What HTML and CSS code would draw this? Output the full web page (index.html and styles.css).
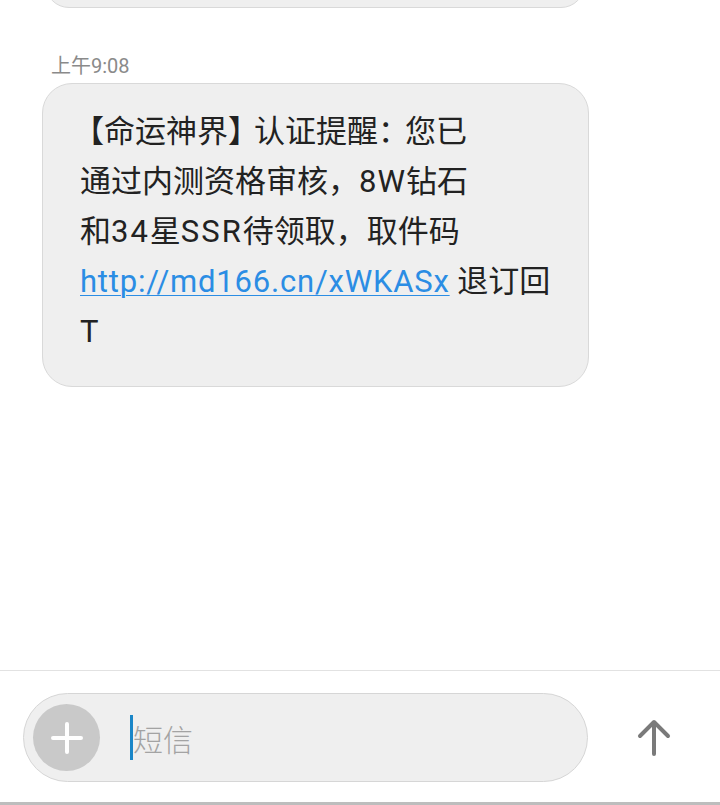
FILE: index.html
```html
<!DOCTYPE html>
<html>
<head>
    <meta charset="utf-8">
    <title>短信</title>
    <link rel="stylesheet" href="styles.css">
</head>
<body>
    <div class="thread">
        <div class="bubble prev"></div>
        <div class="time">上午9:08</div>
        <div class="bubble">
            【命运神界<span class="close">】</span>认证提醒<span class="colon">：</span>您已<br>
            通过内测资格审核，<span class="lat">8W</span>钻石<br>
            和<span class="num">34</span>星<span class="num">SSR</span>待领取，取件码<br>
            <a href="#">http://md166.cn/xWKASx</a> 退订回<br>
            T
        </div>
    </div>

    <div class="composer">
        <div class="input">
            <div class="add">
                <svg width="32" height="32" viewBox="0 0 32 32">
                    <path d="M16 2v28M2 16h28" stroke="#fff" stroke-width="4" stroke-linecap="round"/>
                </svg>
            </div>
            <span class="caret"></span>
            <span class="placeholder">短信</span>
        </div>
        <div class="send">
            <svg width="34" height="38" viewBox="0 0 34 38">
                <path d="M17 35V4M3 17L17 3l14 14" fill="none" stroke="#7a7a7a" stroke-width="4" stroke-linecap="round" stroke-linejoin="round"/>
            </svg>
        </div>
    </div>
</body>
</html>
```

FILE: styles.css
```css
* {
    box-sizing: border-box;
}

body {
    margin: 0;
    height: 805px;
    background-color: #fff;
    font-family: Roboto, "Noto Sans CJK SC", sans-serif;
    color: #222;
    display: flex;
    flex-direction: column;
    overflow: hidden;
}

.thread {
    flex: 1;
    padding-left: 42px;
}

.bubble {
    width: 547px;
    background-color: #efefef;
    border: 1px solid #d9d9d9;
    border-radius: 30px;
    padding: 23px 20px 29px 37px;
    font-size: 31px;
    line-height: 50px;
    text-indent: -7px;
}

.bubble.prev {
    height: 48px;
    margin-top: -40px;
    margin-left: 3px;
    width: 540px;
    padding: 0;
}

.bubble .close {
    letter-spacing: -5px;
}

.bubble .colon {
    letter-spacing: -4px;
}

.bubble .lat {
    letter-spacing: 1px;
}

.bubble .num {
    letter-spacing: 2px;
}

.bubble a {
    color: #2b8de4;
    letter-spacing: 0.8px;
    text-decoration: underline;
    text-decoration-thickness: 1px;
    text-underline-offset: 3px;
}

.time {
    margin: 46px 0 5px 9px;
    font-size: 20px;
    line-height: 24px;
    color: #8a8a8a;
}

.composer {
    border-top: 1px solid #e2e2e2;
    border-bottom: 3px solid #bdbdbd;
    padding: 22px 0 20px 23px;
    display: flex;
    align-items: center;
}

.input {
    width: 565px;
    height: 89px;
    border: 1px solid #d6d6d6;
    border-radius: 45px;
    background-color: #efefef;
    padding-left: 9px;
    display: flex;
    align-items: center;
}

.add {
    width: 67px;
    height: 67px;
    border-radius: 50%;
    background-color: #c9c9c9;
    display: flex;
    justify-content: center;
    align-items: center;
}

.caret {
    width: 3px;
    height: 45px;
    margin-left: 30px;
    background-color: #1a86c8;
}

.placeholder {
    font-size: 30px;
    font-weight: 300;
    color: #a3a3a3;
}

.send {
    flex: 1;
    display: flex;
    justify-content: center;
    align-items: center;
}
```
